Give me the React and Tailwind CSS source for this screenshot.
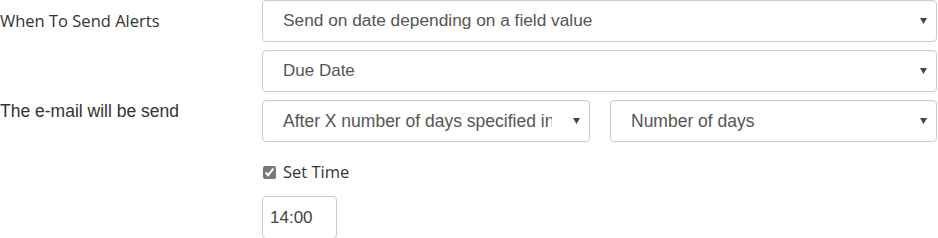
const Caret = () => (
  <svg width="7" height="6" viewBox="0 0 7 6" className="shrink-0">
    <path d="M0 0 L7 0 L3.5 6 Z" fill="#444" />
  </svg>
);

const Select = ({ value, className = "", textClass = "text-[17px]" }) => (
  <div
    className={`flex h-[42px] items-center justify-between rounded-[4px] border border-[#cccccc] bg-white pl-[20px] pr-[9px] shadow-[inset_0_1px_1px_rgba(0,0,0,0.04)] ${className}`}
  >
    <span className={`overflow-hidden whitespace-nowrap text-[#555555] ${textClass}`}>{value}</span>
    <Caret />
  </div>
);

export default function App() {
  return (
    <div className="h-[238px] w-[938px] overflow-hidden bg-white font-['Liberation_Sans',Arial,sans-serif]">
      <div className="flex">
        <div className="w-[262px] shrink-0 pt-[9px] font-['Open_Sans',sans-serif] text-[16.5px] text-[#333333]">
          When To Send Alerts
        </div>
        <div className="flex flex-1 flex-col gap-[8px] pr-px">
          <Select value="Send on date depending on a field value" textClass="text-[17.3px]" />
          <Select value="Due Date" />
        </div>
      </div>

      <div className="mt-[8px] flex">
        <div className="-mt-[2px] w-[262px] shrink-0 text-[17.5px] text-[#333333]">
          The e-mail will be send
        </div>
        <div className="flex flex-1 flex-col pr-px">
          <div className="flex gap-[20px]">
            <Select
              value="After X number of days specified in"
              className="w-[328px] shrink-0 pr-[8px]"
              textClass="w-[269px] text-[17.5px]"
            />
            <Select value="Number of days" className="flex-1" textClass="text-[17.5px]" />
          </div>
          <label className="mt-[18px] flex items-center gap-[7px] pl-[1px] font-['Open_Sans',sans-serif] text-[16.5px] text-[#333333]">
            <input type="checkbox" defaultChecked className="h-[13px] w-[13px] accent-[#777777]" />
            Set Time
          </label>
          <div className="mt-[11px] flex h-[43px] w-[75px] items-center rounded-[4px] border border-[#cccccc] pl-[7px] text-[17px] text-[#444444]">
            14:00
          </div>
        </div>
      </div>
    </div>
  );
}
